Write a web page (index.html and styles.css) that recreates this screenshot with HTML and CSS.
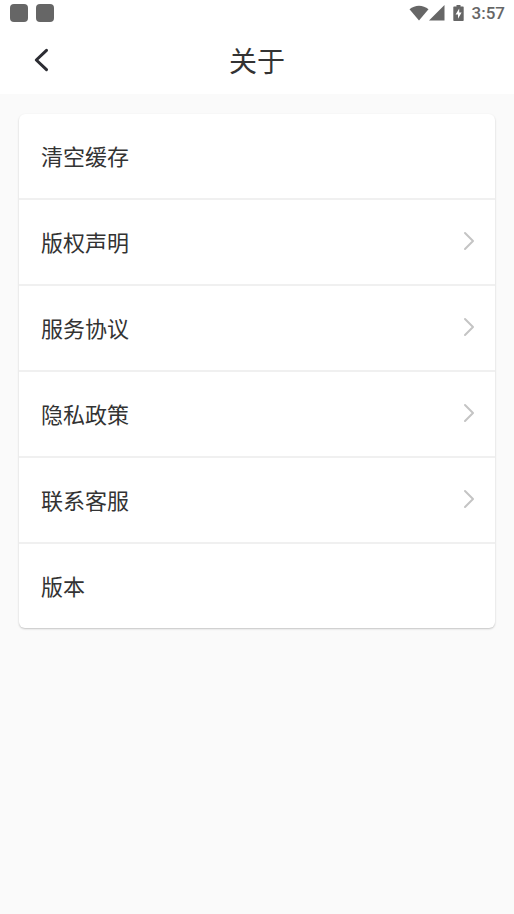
FILE: index.html
```html
<!DOCTYPE html>
<html lang="zh-CN">
<head>
<meta charset="utf-8">
<meta name="viewport" content="width=device-width, initial-scale=1">
<title>关于</title>
<link rel="stylesheet" href="styles.css">
</head>
<body>
<div class="status">
  <span class="notice"></span>
  <span class="notice"></span>
  <svg class="wifi" width="20" height="16" viewBox="0 0 20 16" aria-hidden="true"><path d="M.5 4.300C6-.4 14-.4 19.500 4.300L10 15.500z"/></svg>
  <svg class="signal" width="16" height="16" viewBox="0 0 16 16" aria-hidden="true"><path d="M15.500 0v15.500H0z"/></svg>
  <svg class="battery" width="11" height="16" viewBox="0 0 11 16" aria-hidden="true"><path fill-rule="evenodd" d="M3.500 0h4v1.500H10q.7 0 .7.8v12.900q0 .8-.8.8H1.100q-.8 0-.8-.8V2.300q0-.8.8-.8h2.400zM6.200 3.500 2.600 9.500H5v4.300L8.600 7.600H6.200z"/></svg>
  <span class="time">3:57</span>
</div>
<header class="bar">
  <button class="back" type="button" aria-label="返回">
    <svg width="16" height="24" viewBox="0 0 16 24" aria-hidden="true"><path d="M12.500 2.300 2.300 12l10.200 9.700"/></svg>
  </button>
  <h1 class="title">关于</h1>
</header>
<main class="content">
  <nav class="card">
    <button class="row" type="button">清空缓存</button>
    <a class="row" href="#copyright">版权声明<svg class="chevron" width="12" height="20" viewBox="0 0 12 20" aria-hidden="true"><path d="m2 2 8 8-8 8"/></svg></a>
    <a class="row" href="#terms">服务协议<svg class="chevron" width="12" height="20" viewBox="0 0 12 20" aria-hidden="true"><path d="m2 2 8 8-8 8"/></svg></a>
    <a class="row" href="#privacy">隐私政策<svg class="chevron" width="12" height="20" viewBox="0 0 12 20" aria-hidden="true"><path d="m2 2 8 8-8 8"/></svg></a>
    <a class="row" href="#support">联系客服<svg class="chevron" width="12" height="20" viewBox="0 0 12 20" aria-hidden="true"><path d="m2 2 8 8-8 8"/></svg></a>
    <div class="row">版本</div>
  </nav>
</main>
</body>
</html>
```
FILE: styles.css
```css
* {
  box-sizing: border-box;
}

body {
  margin: 0;
  background: #fafafa;
  color: #333;
  font-family: "Noto Sans CJK SC", sans-serif;
}

.status {
  display: flex;
  align-items: center;
  height: 26px;
  padding: 0 9px 0 10px;
  background: #fff;
}

.status svg {
  fill: #666;
}

.notice {
  width: 18px;
  height: 18px;
  margin-right: 8px;
  border-radius: 4px;
  background: #666;
}

.wifi {
  margin-left: auto;
}

.battery {
  margin: 0 8px;
}

.time {
  color: #666;
  font: 500 17px/26px Roboto, sans-serif;
}

.bar {
  display: grid;
  grid-template-columns: 48px 1fr 48px;
  align-items: center;
  height: 68px;
  padding: 0 18px;
  background: #fff;
}

.back {
  display: flex;
  align-items: center;
  justify-content: center;
  height: 48px;
  padding: 0;
  border: 0;
  background: none;
}

.back path {
  fill: none;
  stroke: #2c2d33;
  stroke-width: 3;
  stroke-linecap: round;
  stroke-linejoin: round;
}

.title {
  margin: 0;
  font-size: 28px;
  font-weight: 400;
  line-height: 40px;
  text-align: center;
}

.content {
  padding: 20px 19px;
}

.card {
  overflow: hidden;
  border-radius: 6px;
  background: #fff;
  box-shadow: 0 1px 2px rgba(0, 0, 0, 0.22);
}

.row {
  display: flex;
  align-items: center;
  justify-content: space-between;
  width: 100%;
  height: 86px;
  padding: 0 20px 2px 22px;
  border: 0;
  border-bottom: 2px solid #f0f0f0;
  background: none;
  color: inherit;
  font: inherit;
  font-size: 22px;
  line-height: 32px;
  text-decoration: none;
}

.row:last-child {
  height: 84px;
  border-bottom: 0;
}

.chevron path {
  fill: none;
  stroke: #c4c4c4;
  stroke-width: 2;
  stroke-linecap: round;
  stroke-linejoin: round;
}
```
